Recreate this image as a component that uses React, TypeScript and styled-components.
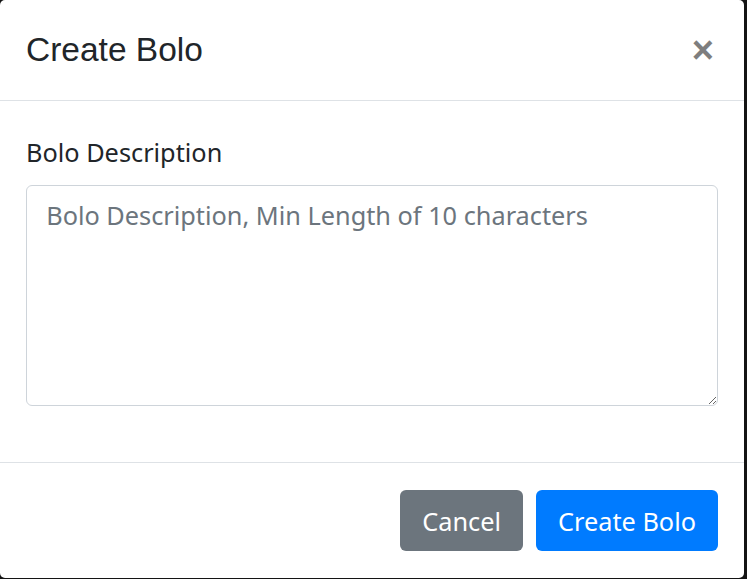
import React from "react";
import styled, { createGlobalStyle } from "styled-components";

const Global = createGlobalStyle`
  html, body { margin: 0; padding: 0; background: #141414; }
  body { width: 747px; height: 579px; overflow: hidden; }
  * { box-sizing: border-box; }
`;

const Modal = styled.div`
  width: 744px;
  height: 578px;
  background: #fff;
  border-radius: 5px;
  display: flex;
  flex-direction: column;
  font-family: "Noto Sans", "Open Sans", sans-serif;
  color: #212529;
`;

const Header = styled.div`
  height: 101px;
  display: flex;
  align-items: center;
  justify-content: space-between;
  padding: 0 26px;
  border-bottom: 1.6px solid #dee2e6;
`;

const Title = styled.h5`
  margin: 0;
  font-family: "Liberation Sans", Arial, sans-serif;
  font-weight: 400;
  font-size: 33.5px;
  line-height: 48px;
  color: #212529;
`;

const Close = styled.button`
  border: 0;
  background: transparent;
  padding: 0;
  margin-right: 4px;
  font-family: "Liberation Sans", Arial, sans-serif;
  font-weight: 700;
  font-size: 38px;
  line-height: 38px;
  color: #000;
  opacity: 0.5;
  cursor: pointer;
`;

const Body = styled.div`
  padding: 32px 26px 0;
  height: 361px;
`;

const Label = styled.label`
  display: block;
  font-size: 25.3px;
  line-height: 38.4px;
  margin-bottom: 13.6px;
  color: #212529;
`;

const TextArea = styled.textarea`
  display: block;
  width: 100%;
  height: 221px;
  padding: 9.6px 19.2px;
  border: 1.6px solid #ced4da;
  border-radius: 6px;
  font-family: "Noto Sans", "Open Sans", sans-serif;
  font-size: 25.3px;
  line-height: 38.4px;
  color: #495057;
  resize: vertical;
  outline: none;
  &::placeholder { color: #6c757d; opacity: 1; }
`;

const Footer = styled.div`
  flex: 1;
  border-top: 1.6px solid #dee2e6;
  display: flex;
  justify-content: flex-end;
  align-items: flex-start;
  gap: 13px;
  padding: 27px 26px 0;
`;

const Button = styled.button<{ $variant: "secondary" | "primary" }>`
  height: 61px;
  padding: 2px 22px 0;
  border: 0;
  border-radius: 6px;
  font-family: "Noto Sans", "Open Sans", sans-serif;
  font-size: 25.3px;
  line-height: 38.4px;
  color: #fff;
  background: ${(p) => (p.$variant === "primary" ? "#007bff" : "#6c757d")};
  cursor: pointer;
`;

export default function App() {
  return (
    <>
      <Global />
      <Modal>
        <Header>
          <Title>Create Bolo</Title>
          <Close aria-label="Close">×</Close>
        </Header>
        <Body>
          <Label htmlFor="bolo">Bolo Description</Label>
          <TextArea id="bolo" placeholder="Bolo Description, Min Length of 10 characters" />
        </Body>
        <Footer>
          <Button $variant="secondary">Cancel</Button>
          <Button $variant="primary">Create Bolo</Button>
        </Footer>
      </Modal>
    </>
  );
}
